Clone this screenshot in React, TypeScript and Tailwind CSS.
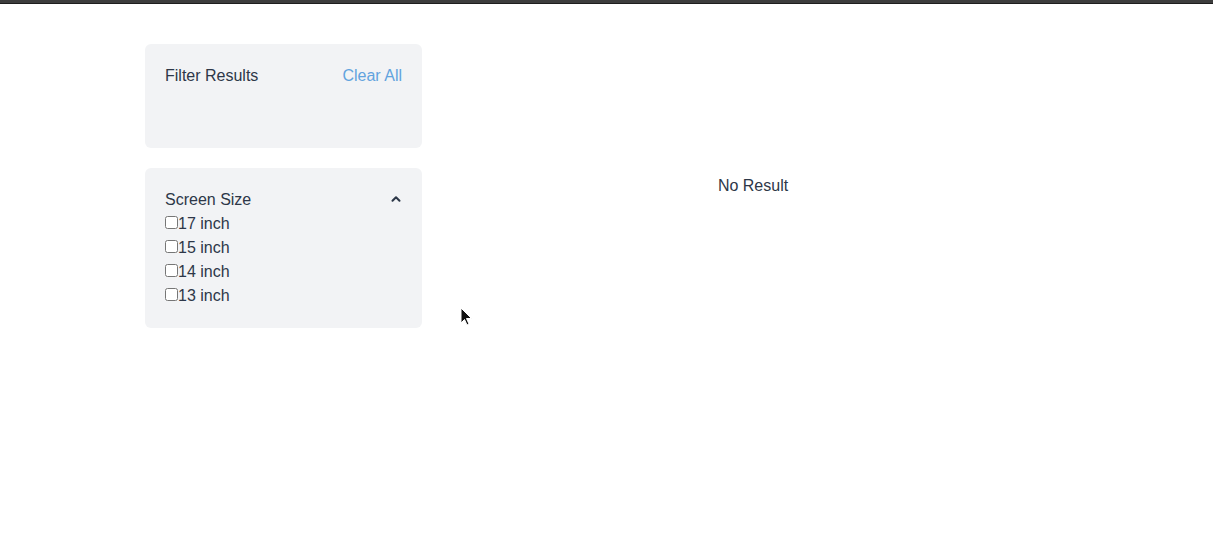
import { ChevronUp } from "lucide-react";

const sizes = ["17 inch", "15 inch", "14 inch", "13 inch"];

export default function App() {
  return (
    <div className="relative min-h-[533px] bg-white text-[16px] text-[#2d3748]" style={{ fontFamily: '"Liberation Sans", Arial, sans-serif' }}>
      {/* top strip */}
      <div className="h-[4px] bg-[#3d3d3d] border-b border-[#1e1e1e]" />

      <div className="flex gap-5 pl-[145px] pr-[149px] pt-[40px]">
        {/* Sidebar */}
        <div className="w-[277px] shrink-0 flex flex-col gap-5">
          <div className="h-[104px] rounded-md bg-[#f2f3f5] px-5 pt-5">
            <div className="flex justify-between leading-6">
              <span>Filter Results</span>
              <button className="text-[#62a3de]">Clear All</button>
            </div>
          </div>

          <div className="rounded-md bg-[#f2f3f5] px-5 pt-5 pb-5 leading-6">
            <div className="flex items-center justify-between">
              <span>Screen Size</span>
              <ChevronUp size={14} strokeWidth={3.5} className="mr-[-1px] mb-[2px] text-[#2d3748]" />
            </div>
            {sizes.map((s) => (
              <label key={s} className="block">
                <input type="checkbox" />
                {s}
              </label>
            ))}
          </div>
        </div>

        {/* Results */}
        <div className="flex-1 text-center pt-[130px] leading-6">No Result</div>
      </div>

      {/* mouse pointer from the capture */}
      <svg className="absolute left-[460px] top-[307px]" width="14" height="20" viewBox="0 0 14 20">
        <path d="M1 1 L1 16 L4.5 12.5 L7 18 L9 17 L6.5 11.5 L11.5 11.5 Z" fill="#111" stroke="#fff" strokeWidth="1" />
      </svg>
    </div>
  );
}
